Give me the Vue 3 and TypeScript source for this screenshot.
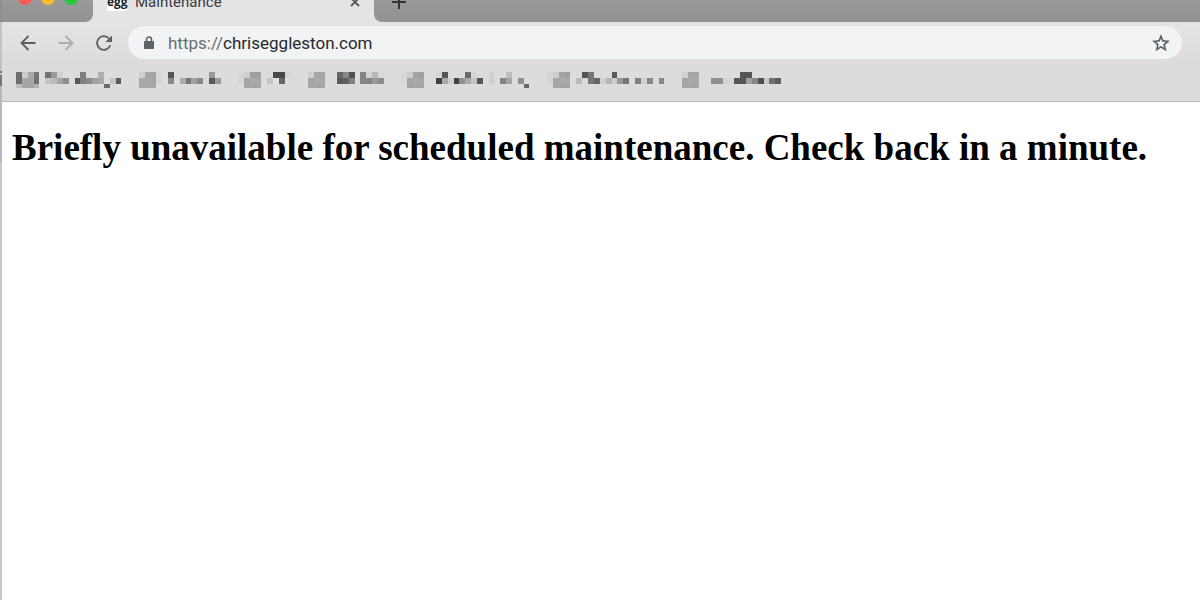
<script setup lang="ts">
interface Bookmark {
  name: string
  cols: number
  width: number
  rows: [string, string, string]
}

interface Cell {
  x: number
  y: number
  h: number
  fill: string
}

// Each row lists "column:grey level" pairs of an obscured bookmark label.
const bookmarks: Bookmark[] = [
  {
    name: 'Bookmark 1', cols: 21, width: 123,
    rows: [
      '0:6e 1:cd 2:a8 3:75 5:72 6:99 7:cf 11:7e 14:b0',
      '0:6e 1:a5 2:a5 3:70 5:c4 6:bb 7:a5 8:8c 10:55 11:7f 12:8a 13:a0 14:a8 16:c4 17:5a',
      '0:bd 1:a5 2:a5 3:b3 15:6a',
    ],
  },
  {
    name: 'Bookmark 2', cols: 17, width: 99,
    rows: [
      '0:d0 1:a5 2:a5 3:d6 5:56 12:99',
      '0:a8 1:a8 2:a5 3:d6 5:88 7:aa 8:77 9:a0 10:88 12:5a 13:99',
      '0:a8 1:a8 2:a8',
    ],
  },
  {
    name: 'Bookmark 3', cols: 12, width: 70,
    rows: ['0:d6 1:cd 2:a0 3:a0 6:48 7:48 8:d6', '0:d6 1:a5 2:aa 3:a8 5:c4 6:e2 7:66', '1:a5 2:a5 3:a5'],
  },
  {
    name: 'Bookmark 4', cols: 16, width: 93,
    rows: [
      '0:d0 1:a5 2:a5 5:66 6:88 7:50 9:84 10:d4 11:b8 12:d6',
      '0:a5 1:aa 2:a8 5:5a 6:60 7:80 9:84 10:84 11:99 12:8c',
      '0:a5 1:a5 2:a5',
    ],
  },
  {
    name: 'Bookmark 5', cols: 25, width: 146,
    rows: [
      '0:d6 1:cd 2:a3 3:a0 6:d6 7:55 11:6a 12:d6 15:d0 18:bd',
      '0:d6 1:a5 2:aa 3:a8 6:42 7:aa 8:d0 9:42 10:90 11:aa 12:c4 13:55 15:d0 17:84 18:a5 20:90',
      '1:a5 2:a5 3:a5 21:66',
    ],
  },
  {
    name: 'Bookmark 6', cols: 23, width: 135,
    rows: [
      '0:d6 1:cd 2:a3 3:a0 6:55 7:77 11:5a',
      '0:d6 1:a5 2:aa 3:a8 5:bb 6:d9 7:77 8:66 9:cf 10:b4 11:cc 12:99 13:77 15:80 16:d0 17:88 19:88',
      '1:a5 2:a5 3:a5',
    ],
  },
  {
    name: 'Bookmark 7', cols: 17, width: 99,
    rows: [
      '0:d0 1:a5 2:a5 10:55 11:55',
      '0:a5 1:aa 2:a8 5:90 6:90 7:d4 8:d6 9:55 10:55 11:a0 12:85 13:50 14:c8 15:70 16:5e',
      '0:a5 1:a5 2:a5',
    ],
  },
]

const rowTops = [0, 6, 12]
const rowHeights = [6, 6, 4]

function cells(mark: Bookmark): Cell[] {
  return mark.rows.flatMap((row, r) =>
    row.split(' ').map((pair) => {
      const [col, grey] = pair.split(':')
      return { x: Number(col), y: rowTops[r], h: rowHeights[r], fill: `#${grey}${grey}${grey}` }
    }),
  )
}
</script>

<template>
  <div class="desktop">
    <div class="window">
      <header class="tabstrip">
        <div class="controls">
          <button class="light red" aria-label="Close window"></button>
          <button class="light yellow" aria-label="Minimize window"></button>
          <button class="light green" aria-label="Zoom window"></button>
        </div>
        <div class="tab">
          <span class="favicon">egg</span>
          <span class="title">Maintenance</span>
          <button class="icon-button" aria-label="Close tab">
            <svg width="10" height="10" viewBox="0 0 10 10"><path d="M1 1l8 8M9 1L1 9" stroke="#55585b" stroke-width="1.8" /></svg>
          </button>
        </div>
        <div class="strip-rest">
          <button class="icon-button" aria-label="New tab">
            <svg width="14" height="14" viewBox="0 0 14 14"><path d="M7 0v14M0 7h14" stroke="#333" stroke-width="2" /></svg>
          </button>
        </div>
      </header>

      <nav class="toolbar">
        <button class="icon-button" aria-label="Back">
          <svg width="16" height="16" viewBox="0 0 16 16" fill="none" stroke="#5c5e61" stroke-width="1.8"><path d="M15.5 8H2M8.5 1L1.5 8l7 7" /></svg>
        </button>
        <button class="icon-button" aria-label="Forward">
          <svg width="16" height="16" viewBox="0 0 16 16" fill="none" stroke="#adabad" stroke-width="1.8"><path d="M.5 8H14M7.500 1l7 7-7 7" /></svg>
        </button>
        <button class="icon-button" aria-label="Reload">
          <svg width="16" height="16" viewBox="0 0 16 16" fill="none"><path d="M14.300 10.200A6.800 6.800 0 1 1 13 3.500" stroke="#5c5e61" stroke-width="1.8" /><path d="M16 .5v6.500H9.500z" fill="#5c5e61" /></svg>
        </button>
        <div class="omnibox">
          <svg width="12" height="14" viewBox="0 0 12 14"><rect x="1" y="5" width="10" height="8" rx="1" fill="#5c6064" /><path d="M3.500 6V3.500a2.500 2.500 0 0 1 5 0V6" fill="none" stroke="#5c6064" stroke-width="1.500" /></svg>
          <a class="url" href="#"><span class="scheme">https://</span>chriseggleston.com</a>
          <button class="icon-button star" aria-label="Bookmark this page">
            <svg width="18" height="18" viewBox="0 0 18 18"><path d="M9 2.200l1.900 4.700 5 .4-3.800 3.300 1.200 4.900L9 12.900l-4.300 2.600 1.200-4.900-3.800-3.300 5-.4z" fill="none" stroke="#5c6064" stroke-width="1.600" /></svg>
          </button>
        </div>
      </nav>

      <nav class="bookmarks">
        <a v-for="mark in bookmarks" :key="mark.name" href="#" :aria-label="mark.name">
          <svg :width="mark.width" height="16" :viewBox="`0 0 ${mark.cols} 16`" preserveAspectRatio="none" shape-rendering="crispEdges">
            <rect v-for="(cell, i) in cells(mark)" :key="i" :x="cell.x" :y="cell.y" width="1" :height="cell.h" :fill="cell.fill" />
          </svg>
        </a>
      </nav>

      <main class="page">
        <h1>Briefly unavailable for scheduled maintenance. Check back in a minute.</h1>
      </main>
    </div>
  </div>
</template>

<style>
body {
  margin: 0;
}
</style>

<style scoped>
.desktop {
  display: flex;
  min-height: 100vh;
  overflow: hidden;
  background: linear-gradient(#8f8f8f 0 22px, #c4c2c4 22px 71px, #777 71px 73px, #c4c2c4 73px 75px, #777 75px 86px, #b8b8b8 86px 162px, #c8c8c8 162px);
}

.window {
  flex: 1;
  min-width: 0;
  margin-left: 2px;
  background: #fff;
  font-family: Roboto, "Liberation Sans", sans-serif;
}

.tabstrip {
  display: flex;
  height: 42px;
  margin-top: -20px;
  background: #e5e4e5;
}

.controls,
.strip-rest {
  display: flex;
  align-items: center;
  box-sizing: border-box;
  background: linear-gradient(#a0a0a0, #929292);
}

.controls {
  width: 91px;
  gap: 9px;
  padding: 0 0 6px 16px;
  border-bottom-right-radius: 8px;
}

.strip-rest {
  flex: 1;
  padding: 2px 18px 0;
  border-bottom-left-radius: 8px;
}

button {
  padding: 0;
  border: 0;
  background: none;
}

.light {
  width: 14px;
  height: 14px;
  border-radius: 50%;
}

.red {
  background: #fc5b57;
}

.yellow {
  background: #fdbc2f;
}

.green {
  background: #28c840;
}

.tab {
  display: flex;
  align-items: center;
  box-sizing: border-box;
  width: 281px;
  padding: 2px 14px 0;
}

.favicon {
  width: 19px;
  height: 18px;
  background: #fff;
  color: #222;
  font: bold 12px/18px "Open Sans", sans-serif;
  text-align: center;
}

.title {
  flex: 1;
  margin-left: 9px;
  color: #3a3a3c;
  font-size: 15px;
  line-height: 20px;
}

.icon-button {
  display: flex;
}

.toolbar {
  display: flex;
  align-items: center;
  gap: 22px;
  padding: 4px 18px 2px;
  background: linear-gradient(#e5e4e5, #dddbde);
}

.omnibox {
  display: flex;
  flex: 1;
  align-items: center;
  height: 33px;
  margin-left: -6px;
  padding: 0 12px 0 15px;
  border-radius: 17px;
  background: #f1f3f4;
}

.url {
  flex: 1;
  margin-left: 13px;
  color: #27292c;
  font-size: 17px;
  line-height: 20px;
  text-decoration: none;
}

.scheme {
  color: #6a6d71;
}

.bookmarks {
  display: flex;
  padding: 11px 14px 13px;
  border-bottom: 1px solid #bbb9bb;
  background: #dddbde;
}

.bookmarks a,
.bookmarks svg {
  display: block;
}

.page {
  padding: 24px 10px;
}

h1 {
  margin: 0;
  color: #000;
  font: bold 37px/44px "Liberation Serif", serif;
  font-variant-ligatures: common-ligatures;
  text-rendering: optimizeLegibility;
}
</style>
